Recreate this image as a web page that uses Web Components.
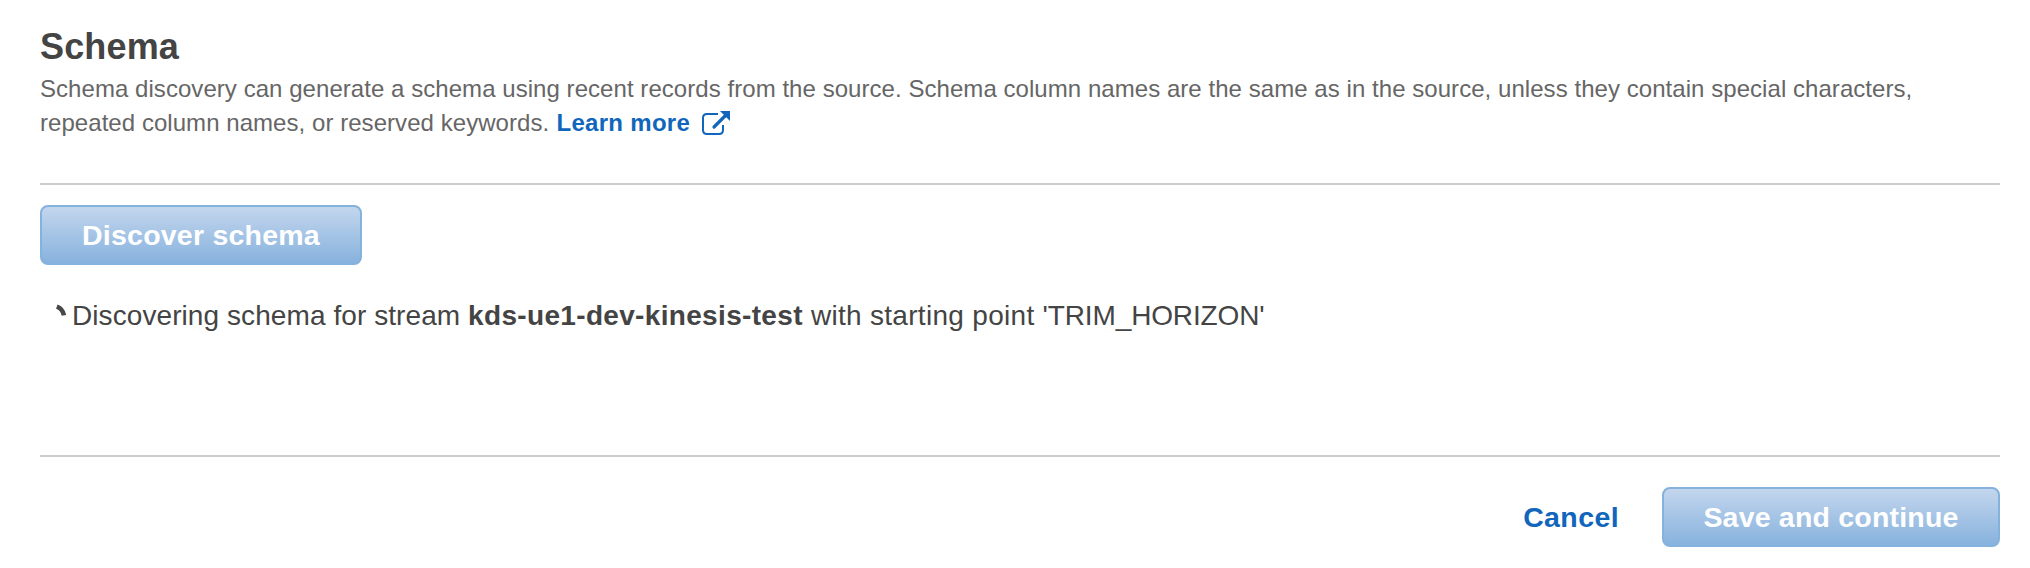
<!DOCTYPE html>
<html lang="en"><head><meta charset="utf-8"><title>Schema</title>
<style>body{margin:0;background:#fff;font-family:"Liberation Sans",Arial,Helvetica,sans-serif;color:#444}</style></head>
<body><schema-panel></schema-panel>
<script>
class ExternalIcon extends HTMLElement{constructor(){super();this.attachShadow({mode:'open'}).innerHTML=`
<style>:host{display:inline-block;width:28px;height:24px;vertical-align:-4px}svg{display:block}</style>
<svg width="28" height="24" viewBox="0 0 28 24" fill="none" stroke="#1166bb"><path d="M16 3H5Q1 3 1 7V19Q1 23 5 23H17Q21 23 21 19V14" stroke-width="2"/><path d="M12 16L23 5" stroke-width="3.2" stroke-linecap="round"/><path d="M18 0H28V10Z" fill="#1166bb" stroke="none"/></svg>`}}
customElements.define('external-icon',ExternalIcon);
class BusySpinner extends HTMLElement{constructor(){super();this.attachShadow({mode:'open'}).innerHTML=`
<style>:host{display:block;width:32px;height:32px;white-space:normal}svg{display:block}</style>
<svg width="32" height="32" viewBox="0 0 32 32"><path d="M16.8 9.6Q22.6 11.6 24 18.4" fill="none" stroke="#484848" stroke-width="4.6"/></svg>`}}
customElements.define('busy-spinner',BusySpinner);
class PrimaryButton extends HTMLElement{constructor(){super();this.attachShadow({mode:'open'}).innerHTML=`
<style>:host{display:block}button{display:block;box-sizing:border-box;height:60px;width:100%;padding:1px 0 0;border:2px solid #85b1dd;border-radius:8px;background:linear-gradient(#c5d7ee,#85b1dd);background-origin:border-box;color:#fff;font:bold 28.5px/55px "Liberation Sans",Arial,sans-serif;letter-spacing:var(--track,0);text-align:center;white-space:nowrap}</style>
<button type="button"><slot></slot></button>`}}
customElements.define('primary-button',PrimaryButton);
class SchemaPanel extends HTMLElement{constructor(){super();this.attachShadow({mode:'open'}).innerHTML=`
<style>
:host{display:block;box-sizing:border-box;height:568px;padding:26px 30px 0 40px}
h1{margin:0;font-size:36px;line-height:42px;letter-spacing:.15px}
p{margin:4px 0 0;font-size:24px;line-height:34px;color:#666;white-space:nowrap;letter-spacing:.052px}
a{color:#1166bb;font-weight:bold;text-decoration:none}
p a{letter-spacing:.3px;margin-left:.5px}
external-icon{margin-left:5px}
hr{margin:0;border:0;height:2px;background:#ccc}
.top{height:157px}
.discover{width:322px;margin-top:20px;--track:.23px}
.status{display:flex;margin-top:32px;height:38px;font-size:28px;line-height:38px;white-space:pre;letter-spacing:.08px}
.status b{letter-spacing:.33px}
.mid{letter-spacing:.3px}
.point{letter-spacing:-.13px}
.space{height:120px}
footer{display:flex;justify-content:flex-end;align-items:center;margin-top:30px;font-size:28px;line-height:32px}
footer a{font-size:28.5px;letter-spacing:.4px;padding-bottom:1px}
.save{width:338px;margin-left:43px;--track:.2px}
</style>
<div class="top"><h1>Schema</h1><p>Schema discovery can generate a schema using recent records from the source. Schema column names are the same as in the source, unless they contain special characters,<br>repeated column names, or reserved keywords. <a href="#">Learn more</a> <external-icon></external-icon></p></div>
<hr><primary-button class="discover">Discover schema</primary-button>
<div class="status"><busy-spinner></busy-spinner><span>Discovering schema for stream </span><b>kds-ue1-dev-kinesis-test</b><span class="mid"> with starting point </span><span class="point">'TRIM_HORIZON'</span></div>
<div class="space"></div><hr>
<footer><a href="#">Cancel</a><primary-button class="save">Save and continue</primary-button></footer>`;}}
customElements.define('schema-panel',SchemaPanel);
</script></body></html>
